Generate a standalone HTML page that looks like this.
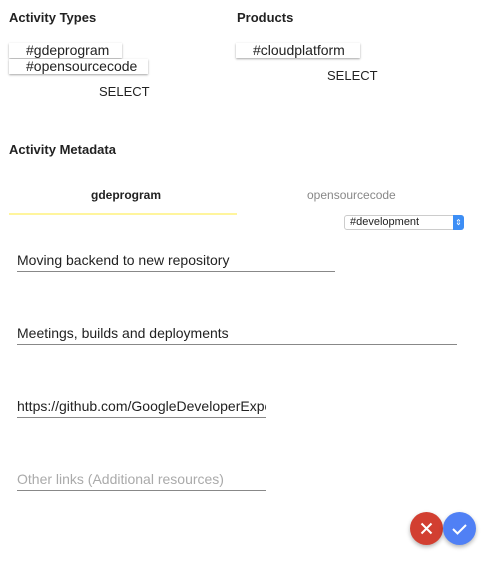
<!DOCTYPE html>
<html><head><style>
body{margin:0;width:483px;height:575px;background:#fff;font-family:"Liberation Sans",sans-serif;position:relative;overflow:hidden;color:#212121}
.a{position:absolute;white-space:nowrap}
.h{font-weight:bold;font-size:13px;color:#222}
.chip{position:absolute;height:15px;background:#fff;box-shadow:0 1px 2px rgba(0,0,0,.35);font-size:14px;line-height:15px;padding-left:17px;box-sizing:border-box;color:#222}
.sel{font-size:13px;color:#222}
.in{position:absolute;left:17px;border-bottom:1px solid #888;font-size:14px;box-sizing:border-box;height:20px;color:#222;overflow:hidden}
</style></head><body>
<div class="a h" style="left:9px;top:10px">Activity Types</div>
<div class="a h" style="left:237px;top:10px">Products</div>
<div class="chip" style="left:9px;top:43px;width:113px">#gdeprogram</div>
<div class="chip" style="left:9px;top:59px;width:139px">#opensourcecode</div>
<div class="chip" style="left:236px;top:43px;width:124px">#cloudplatform</div>
<div class="a sel" style="left:99px;top:84px">SELECT</div>
<div class="a sel" style="left:327px;top:68px">SELECT</div>
<div class="a h" style="left:9px;top:142px">Activity Metadata</div>
<div class="a" style="left:91px;top:188px;font-size:12px;font-weight:bold">gdeprogram</div>
<div class="a" style="left:307px;top:188px;font-size:12px;color:#888">opensourcecode</div>
<div class="a" style="left:9px;top:213px;width:228px;height:2px;background:#fff59d"></div>
<div class="a" style="left:344px;top:215px;width:120px;height:15px;border:1px solid #ccc;border-radius:3px;box-sizing:border-box;font-size:11px;line-height:13px;padding-left:5px">#development<div style="position:absolute;right:-1px;top:-1px;width:11px;height:15px;background:#3d8ef5;border-radius:0 3px 3px 0;color:#fff;font-size:8px;line-height:15px;text-align:center">⇕</div></div>
<div class="in" style="top:252px;width:318px">Moving backend to new repository</div>
<div class="in" style="top:325px;width:440px">Meetings, builds and deployments</div>
<div class="in" style="top:398px;width:249px">https://github.com/GoogleDeveloperExperts</div>
<div class="in" style="top:471px;width:249px;color:#aaa">Other links (Additional resources)</div>
<div class="a" style="left:410px;top:512px;width:33px;height:33px;border-radius:50%;background:#d23f31;box-shadow:0 2px 4px rgba(0,0,0,.3)"><svg width="33" height="33"><path d="M11.5 11.5L21.5 21.5M21.5 11.5L11.5 21.5" stroke="#fff" stroke-width="2"/></svg></div>
<div class="a" style="left:443px;top:512px;width:33px;height:33px;border-radius:50%;background:#5080f5;box-shadow:0 2px 4px rgba(0,0,0,.3)"><svg width="33" height="33"><path d="M10 17l4.5 4.5L23 13" stroke="#fff" stroke-width="2" fill="none"/></svg></div>
</body></html>
